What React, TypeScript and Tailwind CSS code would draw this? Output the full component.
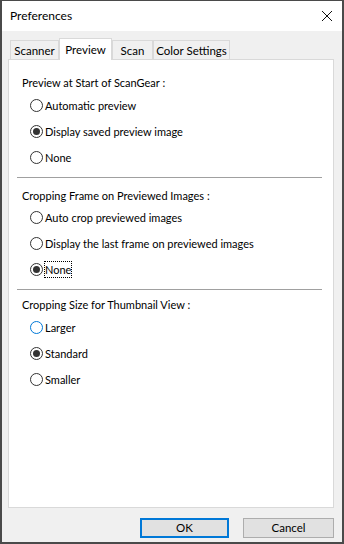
type Opt = { label: string; checked?: boolean; hover?: boolean; focus?: boolean };

function Radio({ label, checked, hover, focus }: Opt) {
  return (
    <div className="flex h-[20px] items-center pl-[21px]">
      <span
        className={`flex h-[13px] w-[13px] shrink-0 items-center justify-center rounded-full border bg-white ${
          hover ? "border-[#0078d7]" : "border-[#333333]"
        }`}
      >
        {checked && <span className="h-[7px] w-[7px] rounded-full bg-[#333333]" />}
      </span>
      <span
        className={`ml-[2px] leading-[15px] ${
          focus ? "outline outline-1 outline-dotted outline-black" : ""
        }`}
      >
        {label}
      </span>
    </div>
  );
}

function Heading({ children }: { children: string }) {
  return <div className="flex h-[20px] items-center pl-[13px]">{children}</div>;
}

function Tab({ label, w, active }: { label: string; w: string; active?: boolean }) {
  if (active)
    return (
      <div
        className={`relative z-10 -mb-px flex h-[22px] items-center justify-center whitespace-nowrap border border-b-0 border-[#d9d9d9] bg-white ${w}`}
      >
        {label}
      </div>
    );
  return (
    <div
      className={`flex h-[19px] items-center justify-center whitespace-nowrap border border-b-0 border-[#d9d9d9] bg-[#f0f0f0] pt-px ${w}`}
    >
      {label}
    </div>
  );
}

export default function App() {
  return (
    <div
      className="flex h-[544px] w-[344px] flex-col border-x-2 border-b-2 border-t border-[#4a4a4a] bg-[#f0f0f0] text-[11px] text-black"
      style={{ fontFamily: 'Lato, "Liberation Sans", sans-serif' }}
    >
      {/* title bar */}
      <div className="flex h-[30px] shrink-0 items-center justify-between bg-white pl-[8px] pr-[8px]">
        <span className="text-[12px]">Preferences</span>
        <svg width="12" height="12" viewBox="0 0 12 12" className="mr-[1px]">
          <path d="M1 1 L11 11 M11 1 L1 11" stroke="#111" strokeWidth="1" />
        </svg>
      </div>

      {/* tabs */}
      <div className="mt-[7px] flex h-[21px] items-end pl-[8px] text-[11.5px]">
        <Tab label="Scanner" w="w-[49px]" />
        <Tab label="Preview" w="w-[53px]" active />
        <Tab label="Scan" w="w-[41px]" />
        <Tab label="Color Settings" w="w-[77px]" />
      </div>

      {/* panel */}
      <div className="ml-[6px] flex h-[449px] w-[326px] flex-col border border-[#d9d9d9] bg-white pt-[13px]">
        <Heading>Preview at Start of ScanGear :</Heading>
        <div className="mt-[2px] flex flex-col gap-[6px]">
          <Radio label="Automatic preview" />
          <Radio label="Display saved preview image" checked />
          <Radio label="None" />
        </div>
        <div className="ml-[8px] mt-[10px] h-px w-[305px] bg-[#a0a0a0]" />

        <div className="mt-[8px]">
          <Heading>Cropping Frame on Previewed Images :</Heading>
        </div>
        <div className="mt-[1px] flex flex-col gap-[6px]">
          <Radio label="Auto crop previewed images" />
          <Radio label="Display the last frame on previewed images" />
          <Radio label="None" checked focus />
        </div>
        <div className="ml-[8px] mt-[10px] h-px w-[305px] bg-[#a0a0a0]" />

        <div className="mt-[5px]">
          <Heading>Cropping Size for Thumbnail View :</Heading>
        </div>
        <div className="mt-[2px] flex flex-col gap-[6px]">
          <Radio label="Larger" hover />
          <Radio label="Standard" checked />
          <Radio label="Smaller" />
        </div>
      </div>

      {/* buttons */}
      <div className="mt-[10px] flex justify-end gap-[14px] pr-[8px] text-[11.5px]">
        <button className="h-[20px] w-[89px] border-2 border-[#0078d7] bg-[#e1e1e1] leading-none">
          OK
        </button>
        <button className="h-[20px] w-[91px] border border-[#adadad] bg-[#e1e1e1] leading-none">
          Cancel
        </button>
      </div>
    </div>
  );
}
